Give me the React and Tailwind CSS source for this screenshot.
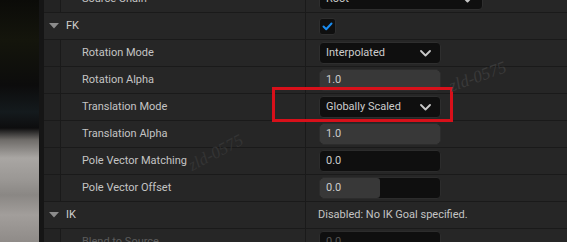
import React from "react";

const Chevron = () => (
  <svg width="11" height="7" viewBox="0 0 11 7" className="shrink-0">
    <polyline points="1,1 5.5,5.5 10,1" fill="none" stroke="#c8c8c8" strokeWidth="1.8" strokeLinecap="round" strokeLinejoin="round" />
  </svg>
);

const Combo = ({ text, w = "w-[122px]" }) => (
  <div className={`${w} h-[22px] rounded-[4px] bg-[#0f0f0f] border border-[#2e2e2e] flex items-center justify-between pl-[6px] pr-[9px]`}>
    <span>{text}</span>
    <Chevron />
  </div>
);

const Spin = ({ text, fill, disabled }) => (
  <div className="relative w-[122px] h-[22px] rounded-[4px] bg-[#0f0f0f] border border-[#2c2c2c] overflow-hidden flex items-center pl-[6px]">
    {fill ? (
      <div className="absolute left-0 top-0 bottom-0 bg-[#383838] rounded-[3px]" style={{ width: fill }} />
    ) : null}
    <span className={`relative ${disabled ? "text-[#555555]" : ""}`}>{text}</span>
  </div>
);

const Tri = () => (
  <svg width="10" height="6" viewBox="0 0 10 6" className="shrink-0">
    <polygon points="0,0 10,0 5,5.5" fill="#8c8c8c" />
  </svg>
);

function Row({ label, category, disabled, children }) {
  return (
    <div className="flex h-[27px] border-b border-[#1a1a1a]">
      {category ? (
        <div className="w-[261px] flex items-center pl-[5px] gap-[7px] text-[#cfcfcf]">
          <Tri />
          <span>{label}</span>
        </div>
      ) : (
        <>
          <div className="w-[17px] bg-[#232323] border-r border-[#1a1a1a]" />
          <div className={`w-[244px] flex items-center pl-[21px] ${disabled ? "text-[#5c5c5c]" : "text-[#c4c4c4]"}`}>
            {label}
          </div>
        </>
      )}
      <div className="w-px bg-[#1a1a1a]" />
      <div className="flex-1 flex items-center pl-[13px] text-[#cccccc]">{children}</div>
    </div>
  );
}

export default function App() {
  return (
    <div
      className="relative w-[567px] h-[242px] overflow-hidden flex text-[11px]"
      style={{ fontFamily: "Roboto, 'Noto Sans', sans-serif" }}
    >
      <div className="w-[39px] shrink-0 bg-[linear-gradient(180deg,#0b0b08_0px,#14150c_40px,#0c0c0c_85px,#141a1d_112px,#0d0d0e_128px,#6f6c69_140px,#a9a6a3_158px,#9a9794_180px,#8a8784_195px,#a29e9b_215px,#8f8b88_242px)]" />
      <div className="w-[5px] shrink-0 bg-[#151515]" />
      <div className="flex-1 bg-[#262626] overflow-hidden">
        <div className="-mt-[14px]">
          <Row label="Source Chain">
            <Combo text="Root" w="w-[164px]" />
          </Row>
          <Row label="FK" category>
            <div className="w-[17px] h-[17px] rounded-[3px] bg-[#0f0f0f] border border-[#2e2e2e] flex items-center justify-center">
              <svg width="11" height="9" viewBox="0 0 11 9">
                <polyline points="1.5,4.5 4.2,7.2 9.5,1.5" fill="none" stroke="#1a8cf0" strokeWidth="2" strokeLinecap="round" strokeLinejoin="round" />
              </svg>
            </div>
          </Row>
          <Row label="Rotation Mode">
            <Combo text="Interpolated" />
          </Row>
          <Row label="Rotation Alpha">
            <Spin text="1.0" fill="100%" />
          </Row>
          <Row label="Translation Mode">
            <Combo text="Globally Scaled" />
          </Row>
          <Row label="Translation Alpha">
            <Spin text="1.0" fill="100%" />
          </Row>
          <Row label="Pole Vector Matching">
            <Spin text="0.0" />
          </Row>
          <Row label="Pole Vector Offset">
            <Spin text="0.0" fill="60px" />
          </Row>
          <Row label="IK" category>
            <span className="-ml-[1px] text-[#c4c4c4]">Disabled: No IK Goal specified.</span>
          </Row>
          <Row label="Blend to Source" disabled>
            <Spin text="0.0" disabled />
          </Row>
        </div>
      </div>
      <div className="absolute left-[272px] top-[87px] w-[181px] h-[35px] border-[3px] border-[#d8101a]" />
      <div
        className="absolute left-[448px] top-[64px] text-[17px] italic text-[#3a3a3a] -rotate-[20deg] pointer-events-none"
        style={{ fontFamily: "'Liberation Serif', serif" }}
      >
        zld-0575
      </div>
      <div
        className="absolute left-[186px] top-[140px] text-[17px] italic text-[#343434] -rotate-[28deg] pointer-events-none"
        style={{ fontFamily: "'Liberation Serif', serif" }}
      >
        zld-0575
      </div>
    </div>
  );
}
